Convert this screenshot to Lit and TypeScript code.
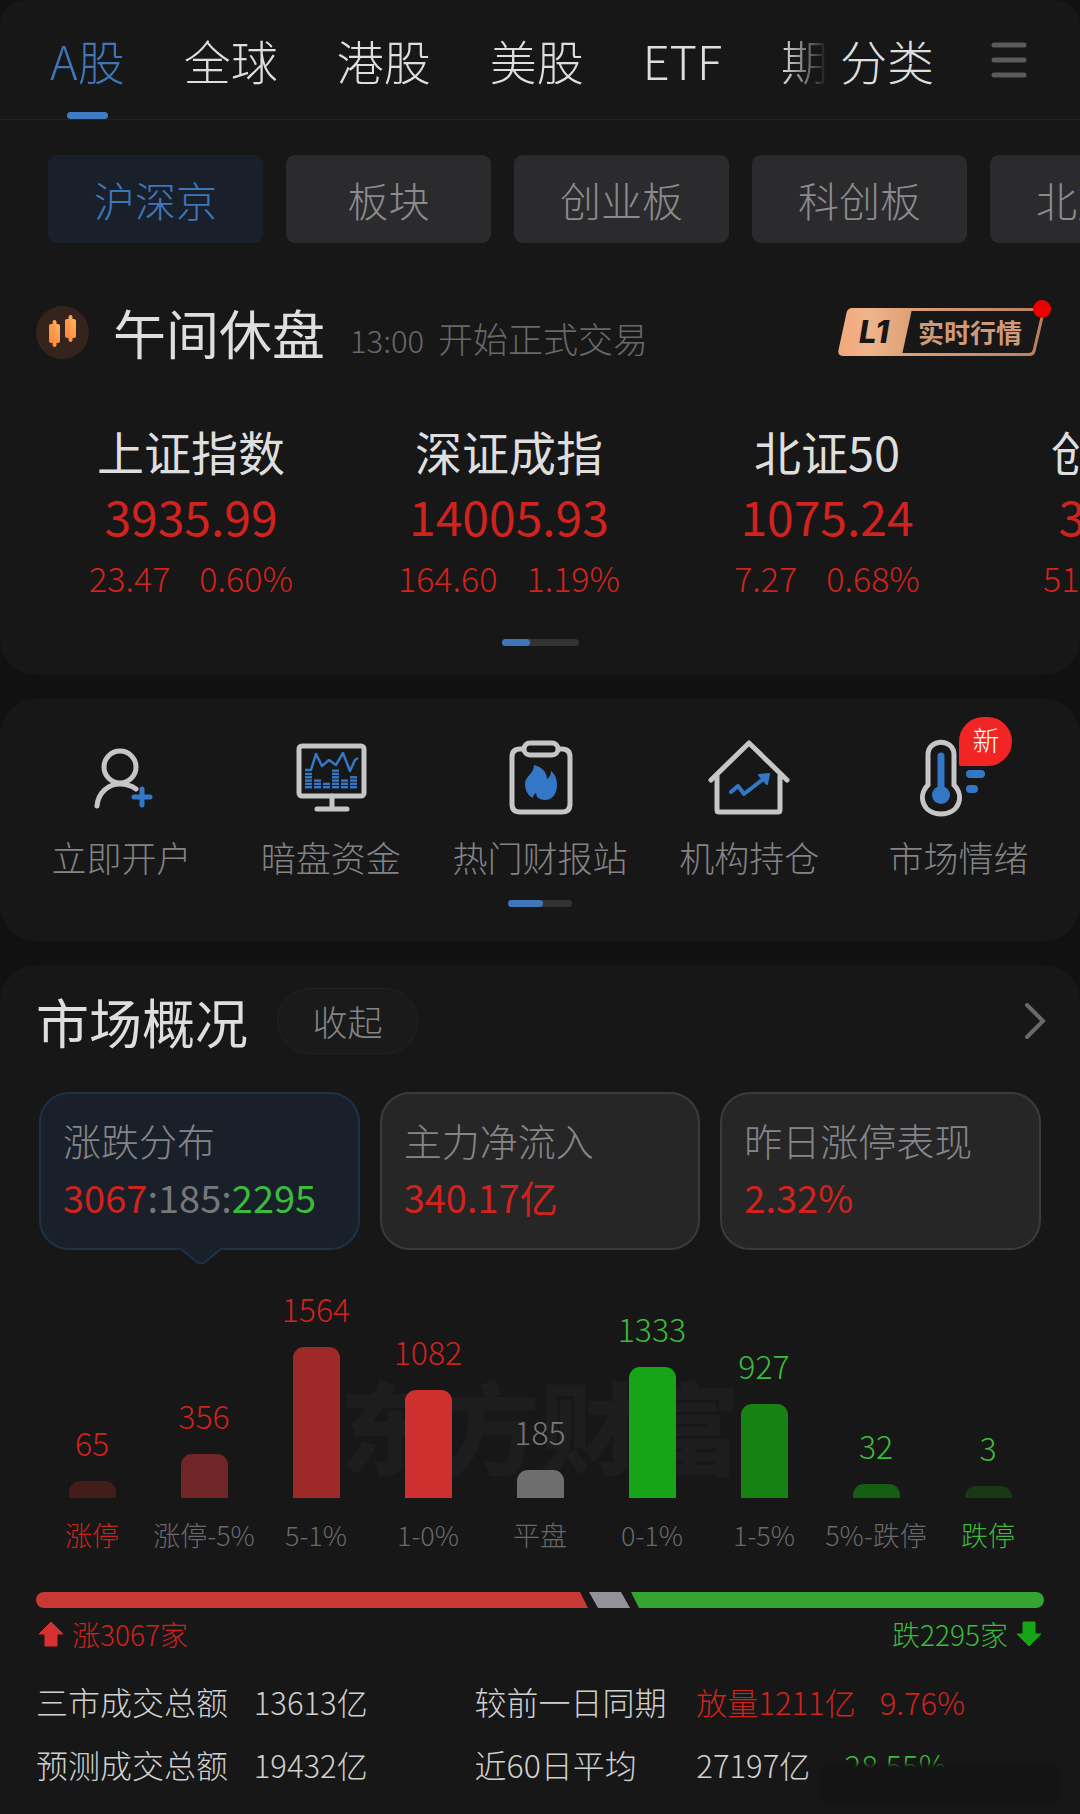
import { LitElement, html, css, svg, nothing } from "lit";
import { customElement, state } from "lit/decorators.js";
import { classMap } from "lit/directives/class-map.js";
import { styleMap } from "lit/directives/style-map.js";

interface IndexQuote { name: string; value: string; change: string; percent: string; }
interface Shortcut { label: string; icon: unknown; badge?: string; }
interface Bucket { label: string; count: number; height: number; color: string; tone: string; edge?: boolean; }

const TABS = ["A股", "全球", "港股", "美股", "ETF", "期货"];
const BOARDS = ["沪深京", "板块", "创业板", "科创板", "北交所"];

const QUOTES: IndexQuote[] = [
  { name: "上证指数", value: "3935.99", change: "23.47", percent: "0.60%" },
  { name: "深证成指", value: "14005.93", change: "164.60", percent: "1.19%" },
  { name: "北证50", value: "1075.24", change: "7.27", percent: "0.68%" },
  { name: "创业板指", value: "3300.00", change: "51.00", percent: "1.57%" },
];

const BUCKETS: Bucket[] = [
  { label: "涨停", count: 65, height: 17, color: "#431c1c", tone: "up", edge: true },
  { label: "涨停-5%", count: 356, height: 44, color: "#702527", tone: "up" },
  { label: "5-1%", count: 1564, height: 151, color: "#9d2a29", tone: "up" },
  { label: "1-0%", count: 1082, height: 108, color: "#ce302f", tone: "up" },
  { label: "平盘", count: 185, height: 28, color: "#6e6e6e", tone: "flat" },
  { label: "0-1%", count: 1333, height: 131, color: "#16a516", tone: "down" },
  { label: "1-5%", count: 927, height: 94, color: "#168214", tone: "down" },
  { label: "5%-跌停", count: 32, height: 14, color: "#165d14", tone: "down" },
  { label: "跌停", count: 3, height: 12, color: "#173916", tone: "down", edge: true },
];

const BREADTH = { up: 3067, flat: 185, down: 2295 };

/* Volume columns under the trend line of the monitor icon: x position and number of slices. */
const MONITOR_COLUMNS = [[14, 5], [23, 3], [32, 2], [41, 6], [50, 3], [59, 4]];

const accountIcon = svg`
  <g fill="none" stroke-linecap="round" stroke-width="5">
    <circle cx="38" cy="28" r="16" stroke="#c6c6c6"></circle>
    <path d="M15 67C16 54 26 45 38 45C44 45 50 47 54 50" stroke="#c6c6c6"></path>
    <path d="M52 58H68M60 50V66" stroke="#3377c6"></path>
  </g>`;

const monitorIcon = svg`
  <g fill="none" stroke="#c6c6c6" stroke-width="5" stroke-linecap="round">
    <rect x="8" y="7" width="65" height="50" rx="3"></rect>
    <path d="M41 57V69M26 70H56"></path>
  </g>
  <path d="M14 31H20L25 15L31 27L38 21L45 26L52 14L59 32L64 21L67 19" fill="none" stroke="#3377c6" stroke-width="2.500" stroke-linejoin="round"></path>
  <g fill="#3377c6">${MONITOR_COLUMNS.map(([x, n]) =>
    Array.from({ length: n }, (_, i) => svg`<rect x=${x} y=${(47 - i * 3.3).toFixed(1)} width="7" height="2.400"></rect>`))}</g>`;

const reportIcon = svg`
  <g fill="none" stroke="#c6c6c6" stroke-width="5">
    <path d="M22 10H20Q12 10 12 18V65Q12 73 20 73H62Q70 73 70 65V18Q70 10 62 10H60"></path>
    <rect x="24" y="4" width="34" height="12" rx="6"></rect>
  </g>
  <path d="M34 26C42 28 47 33 47 40C50 38 51 35 51 32C55 35 57 40 57 46C57 55 52 61 45 61C42 61 39 60 37 58L36 54C34 55 33 57 33 59C28 57 25 51 25 45C25 37 34 35 34 26Z" fill="#3377c6"></path>`;

const holdingIcon = svg`
  <g fill="none" stroke="#c6c6c6" stroke-width="5" stroke-linecap="round" stroke-linejoin="round">
    <path d="M2 41L40 4L78 41"></path>
    <path d="M8 37V71Q8 73 10 73H69Q71 73 71 71V37"></path>
  </g>
  <path d="M22 53L29 47L35 55L53 41" fill="none" stroke="#3377c6" stroke-width="4" stroke-linecap="round" stroke-linejoin="round"></path>
  <path d="M50 36L60 35L58 45Z" fill="#3377c6" stroke="#3377c6" stroke-width="2" stroke-linejoin="round"></path>`;

const moodIcon = svg`
  <path d="M10 16C10 -1 36 -1 36 16V46C47 57 41 75 23 75C5 75 -1 57 10 46Z" fill="none" stroke="#c6c6c6" stroke-width="5"></path>
  <path d="M23 17V54" stroke="#3377c6" stroke-width="7" stroke-linecap="round"></path>
  <circle cx="23" cy="56" r="9" fill="#3377c6"></circle>
  <path d="M52 35H63M52 50H56" stroke="#3377c6" stroke-width="8" stroke-linecap="round"></path>`;

const SHORTCUTS: Shortcut[] = [
  { label: "立即开户", icon: accountIcon },
  { label: "暗盘资金", icon: monitorIcon },
  { label: "热门财报站", icon: reportIcon },
  { label: "机构持仓", icon: holdingIcon },
  { label: "市场情绪", icon: moodIcon, badge: "新" },
];

@customElement("app-root")
export class AppRoot extends LitElement {
  @state() private tab = 0;
  @state() private board = 0;
  @state() private card = 0;

  static styles = css`
    :host {
      display: block;
      min-height: 100vh;
      background: #111111;
      color: #dedede;
      font-family: "Noto Sans CJK SC", sans-serif;
      font-weight: 300;
      overflow: hidden;
    }
    * { box-sizing: border-box; }
    button {
      margin: 0; padding: 0; border: 0; background: none; color: inherit;
      font: inherit; text-align: inherit; white-space: nowrap; cursor: pointer; flex: none;
    }
    a { color: inherit; text-decoration: none; }
    h2, p, dl, dd, dt { margin: 0; font-weight: inherit; }
    svg { display: block; flex: none; overflow: visible; }
    .page { display: flex; flex-direction: column; gap: 24px; }
    .panel { background: #171717; border-radius: 36px; overflow: hidden; }
    .panel.top { border-radius: 24px 24px 36px 36px; padding-bottom: 29px; }
    .panel.last { border-radius: 36px 36px 0 0; padding: 23px 36px 20px; }
    .up { color: #d0221e; }
    .down { color: #3cba3c; }
    .flat { color: #77777a; }

    .nav {
      display: flex; align-items: stretch; height: 120px; padding-right: 53px;
      border-bottom: 1px solid #232323; font-size: 47px; line-height: 116px;
    }
    .tabs {
      display: flex; gap: 59px; flex: 1; min-width: 0; overflow: hidden; padding-left: 50px;
      mask-image: linear-gradient(to right, #000 calc(100% - 48px), transparent calc(100% - 2px));
    }
    .tab { position: relative; }
    .tab.on { color: #3f76ba; }
    .tab.on::after {
      content: ""; position: absolute; left: 50%; bottom: 0; width: 41px; height: 7px;
      margin-left: -20px; border-radius: 4px; background: #3f7cc4;
    }
    .category { margin-left: 10px; }
    .menu { display: flex; align-items: center; margin-left: 57px; }

    .boards { display: flex; gap: 23px; padding: 35px 0 0 48px; }
    .board {
      height: 88px; min-width: 205px; padding: 0 46px; border-radius: 9px; text-align: center;
      background: #2b2b2d; color: #8b8b8d; font-size: 41px; line-height: 84px;
    }
    .board.on { background: #19202a; color: #3f76ba; }

    .session { display: flex; align-items: center; height: 60px; margin-top: 59px; padding: 0 34px 0 36px; }
    .session-title { margin-left: 24px; font-size: 53px; line-height: 60px; font-weight: 400; }
    .session-note { display: flex; align-items: baseline; gap: 14px; margin: 14px auto 0 25px; color: #68686a; font-size: 35px; line-height: 50px; }
    .session-time { font-size: 31px; }
    .level { position: relative; display: flex; align-items: center; width: 208px; height: 48px; }
    .level-frame { position: absolute; inset: 0; }
    .level-tag {
      position: relative; width: 74px; padding-right: 2px; text-align: center; color: #171717;
      font: italic 800 31px/46px Inter, "Liberation Sans", sans-serif;
    }
    .level-text { position: relative; margin-left: 6px; color: #d09a7a; font-size: 26px; line-height: 44px; font-weight: 700; }

    .quotes { display: flex; padding: 58px 0 0 32px; overflow: hidden; }
    .quote { flex: none; width: 318px; display: flex; flex-direction: column; align-items: center; white-space: nowrap; }
    .quote-name { font-size: 47px; line-height: 62px; font-weight: 400; }
    .quote-value { font-size: 48px; line-height: 66px; font-weight: 400; }
    .quote-change { display: flex; gap: 29px; font-size: 34px; line-height: 60px; }

    .pager { width: 77px; height: 7px; margin: 31px auto 0; border-radius: 4px; background: #333333; }
    .pager-thumb { width: 28px; height: 7px; border-radius: 4px; background: #3f76ba; }
    .pager.small { width: 64px; margin-top: 18px; }
    .pager.small .pager-thumb { width: 35px; }

    .panel.links { padding: 40px 17px 34px; }
    .shortcuts { display: grid; grid-template-columns: repeat(5, 1fr); }
    .shortcut { display: flex; flex-direction: column; align-items: center; color: #838385; font-size: 35px; line-height: 50px; white-space: nowrap; }
    .shortcut-icon { position: relative; width: 80px; height: 78px; margin-bottom: 15px; }
    .badge {
      position: absolute; left: 41px; top: -22px; width: 53px; height: 49px; text-align: center;
      border-radius: 25px 25px 25px 2px; background: #f32424; color: #ffffff; font-size: 27px; line-height: 46px;
    }

    .head { display: flex; align-items: center; height: 66px; }
    .head-title { font-size: 53px; line-height: 62px; font-weight: 400; }
    .collapse {
      width: 141px; height: 66px; margin: 0 auto 0 29px; border: 1px solid #222222; border-radius: 33px;
      background: #1a1a1a; color: #858587; font-size: 35px; line-height: 60px; text-align: center;
    }
    .cards { display: grid; grid-template-columns: repeat(3, 1fr); gap: 20px; padding: 38px 3px 0; }
    .card {
      position: relative; height: 158px; padding: 0 22px 6px; border: 2px solid #3b3b3d; border-radius: 30px;
      background: #262626; color: #858589; font-size: 38px; line-height: 57px;
    }
    .card.on { background: #19202a; border-color: #1e3149; }
    .card-label, .card-value { display: block; }
    .card-value { font-weight: 400; }
    .card-pointer { position: absolute; left: 50%; top: 154px; margin-left: -18px; }

    .chart { position: relative; display: grid; grid-template-columns: repeat(9, 1fr); height: 305px; }
    .watermark {
      position: absolute; left: 0; right: 0; top: 104px; text-align: center;
      color: #1d1d1d; font-size: 100px; line-height: 140px; font-weight: 900;
    }
    .bucket { position: relative; display: flex; flex-direction: column; align-items: center; justify-content: flex-end; white-space: nowrap; }
    .bucket-count { font-size: 32px; line-height: 46px; margin-bottom: 16px; }
    .bar { width: 47px; border-radius: 11px 11px 0 0; }
    .bucket-label { font-size: 27px; line-height: 40px; margin-top: 17px; color: #69696b; }
    .bucket-label.up { color: #d0221e; }
    .bucket-label.down { color: #3cba3c; }

    .breadth { display: flex; gap: 1px; height: 16px; margin-top: 37px; }
    .breadth-up { border-radius: 8px 0 0 8px; background: #c83835; clip-path: polygon(0 0, calc(100% - 8px) 0, 100% 100%, 0 100%); }
    .breadth-flat { min-width: 41px; background: #929298; clip-path: polygon(0 0, calc(100% - 9px) 0, 100% 100%, 9px 100%); }
    .breadth-down { border-radius: 0 8px 8px 0; background: #35a432; clip-path: polygon(0 0, 100% 0, 100% 100%, 8px 100%); }
    .totals { display: flex; justify-content: space-between; padding: 6px 2px 0; font-size: 28px; line-height: 40px; }
    .total { display: flex; align-items: center; gap: 8px; }

    .stats {
      display: grid; grid-template-columns: 218fr 221fr 222fr 348fr; align-items: baseline; margin-top: 16px;
      font-size: 32px; line-height: 63px; color: #d0d0d0; white-space: nowrap;
    }
    .stat-value { display: flex; gap: 24px; font-size: 31px; }
    .smudged { position: relative; }
    .smudge {
      position: absolute; left: -14px; top: 31px; width: 240px; height: 40px; border-radius: 14px;
      background: #141414; filter: blur(2px);
    }
  `;

  private renderNav() {
    return html`
      <nav class="nav">
        <div class="tabs">
          ${TABS.map((t, i) => html`<button class=${classMap({ tab: true, on: i === this.tab })} @click=${() => (this.tab = i)}>${t}</button>`)}
        </div>
        <button class="category">分类</button>
        <button class="menu" aria-label="菜单">
          <svg width="36" height="36" viewBox="0 0 36 36"><path d="M3 3H33M3 18H33M3 33H33" stroke="#5b5b5b" stroke-width="5" stroke-linecap="round"></path></svg>
        </button>
      </nav>`;
  }

  private renderSession() {
    return html`
      <div class="session">
        <svg width="53" height="53" viewBox="0 0 53 53">
          <defs><linearGradient id="flare" x1="0" y1="1" x2="1" y2="0"><stop offset="0" stop-color="#ff8038"></stop><stop offset="1" stop-color="#ffb45e"></stop></linearGradient></defs>
          <circle cx="26.5" cy="26.5" r="26.5" fill="#35241c"></circle>
          <g fill="url(#flare)">
            <rect x="13" y="18" width="11" height="19" rx="2"></rect><rect x="16.5" y="14" width="4" height="27" rx="2"></rect>
            <rect x="29" y="13" width="11" height="19" rx="2"></rect><rect x="32.5" y="9" width="4" height="27" rx="2"></rect>
          </g>
        </svg>
        <h2 class="session-title">午间休盘</h2>
        <p class="session-note"><span class="session-time">13:00</span><span>开始正式交易</span></p>
        <a class="level" href="#level1">
          <svg class="level-frame" width="208" height="48" viewBox="0 0 208 48">
            <defs><linearGradient id="copper" gradientUnits="userSpaceOnUse" x1="0" x2="208"><stop offset="0" stop-color="#f0a878"></stop><stop offset="0.15" stop-color="#f0b48c"></stop><stop offset="0.35" stop-color="#dd9f76"></stop><stop offset="1" stop-color="#b67e60"></stop></linearGradient></defs>
            <path d="M14 1.500H202Q206 1.500 205 5L196 43Q195 46.500 191 46.500H5Q1 46.500 2 42L10 5Q11 1.500 14 1.500Z" fill="none" stroke="url(#copper)" stroke-width="3"></path>
            <path d="M14 1H74L64 47H5Q0 47 1.500 42L9.500 5Q10.500 1 14 1Z" fill="url(#copper)"></path>
            <circle cx="204" cy="1" r="9" fill="#ee0000"></circle>
          </svg>
          <span class="level-tag">L1</span><span class="level-text">实时行情</span>
        </a>
      </div>`;
  }

  private renderQuotes() {
    return html`
      <div class="quotes">
        ${QUOTES.map((q) => html`
          <div class="quote">
            <span class="quote-name">${q.name}</span>
            <span class="quote-value up">${q.value}</span>
            <span class="quote-change up"><span>${q.change}</span><span>${q.percent}</span></span>
          </div>`)}
      </div>`;
  }

  private renderCard(index: number, label: string, value: unknown) {
    const on = index === this.card;
    return html`
      <button class=${classMap({ card: true, on })} @click=${() => (this.card = index)}>
        <span class="card-label">${label}</span>
        <span class="card-value up">${value}</span>
        ${on ? html`<svg class="card-pointer" width="40" height="18" viewBox="0 0 40 18">
          <path d="M0 0L16 14Q20 17 24 14L40 0Z" fill="#19202a"></path>
          <path d="M0 1L16 14Q20 17 24 14L40 1" fill="none" stroke="#1e3149" stroke-width="2"></path>
        </svg>` : nothing}
      </button>`;
  }

  private renderChart() {
    return html`
      <div class="chart">
        <div class="watermark" aria-hidden="true">东方财富</div>
        ${BUCKETS.map((b) => html`
          <div class="bucket">
            <span class="bucket-count ${b.tone}">${b.count}</span>
            <div class="bar" style=${styleMap({ height: `${b.height}px`, background: b.color })}></div>
            <span class="bucket-label ${b.edge ? b.tone : ""}">${b.label}</span>
          </div>`)}
      </div>
      <div class="breadth">
        <div class="breadth-up" style=${styleMap({ flex: `${BREADTH.up} 1 0` })}></div>
        <div class="breadth-flat" style=${styleMap({ flex: `${BREADTH.flat} 1 0` })}></div>
        <div class="breadth-down" style=${styleMap({ flex: `${BREADTH.down} 1 0` })}></div>
      </div>
      <div class="totals">
        <span class="total up">
          <svg width="26" height="26" viewBox="0 0 26 26"><path d="M13 1L25 13H19V25H7V13H1Z" fill="#d63030" stroke="#d63030" stroke-linejoin="round"></path></svg>
          涨${BREADTH.up}家
        </span>
        <span class="total down">
          跌${BREADTH.down}家
          <svg width="26" height="26" viewBox="0 0 26 26"><path d="M13 25L25 13H19V1H7V13H1Z" fill="#16a516" stroke="#16a516" stroke-linejoin="round"></path></svg>
        </span>
      </div>`;
  }

  render() {
    return html`
      <main class="page">
        <section class="panel top">
          ${this.renderNav()}
          <div class="boards">
            ${BOARDS.map((b, i) => html`<button class=${classMap({ board: true, on: i === this.board })} @click=${() => (this.board = i)}>${b}</button>`)}
          </div>
          ${this.renderSession()}
          ${this.renderQuotes()}
          <div class="pager"><div class="pager-thumb"></div></div>
        </section>

        <section class="panel links">
          <div class="shortcuts">
            ${SHORTCUTS.map((s) => html`
              <a class="shortcut" href="#shortcut">
                <span class="shortcut-icon">
                  <svg width="80" height="78" viewBox="0 0 80 78">${s.icon}</svg>
                  ${s.badge ? html`<span class="badge">${s.badge}</span>` : nothing}
                </span>
                <span>${s.label}</span>
              </a>`)}
          </div>
          <div class="pager small"><div class="pager-thumb"></div></div>
        </section>

        <section class="panel last">
          <div class="head">
            <h2 class="head-title">市场概况</h2>
            <button class="collapse">收起</button>
            <button aria-label="更多">
              <svg width="20" height="36" viewBox="0 0 20 36"><path d="M3 2L19 18L3 34" fill="none" stroke="#69696b" stroke-width="4" stroke-linecap="round"></path></svg>
            </button>
          </div>
          <div class="cards">
            ${this.renderCard(0, "涨跌分布", html`${BREADTH.up}<span class="flat">:${BREADTH.flat}:</span><span class="down">${BREADTH.down}</span>`)}
            ${this.renderCard(1, "主力净流入", "340.17亿")}
            ${this.renderCard(2, "昨日涨停表现", "2.32%")}
          </div>
          ${this.renderChart()}
          <dl class="stats">
            <dt>三市成交总额</dt><dd class="stat-value">13613亿</dd>
            <dt>较前一日同期</dt><dd class="stat-value up"><span>放量1211亿</span><span>9.76%</span></dd>
            <dt>预测成交总额</dt><dd class="stat-value">19432亿</dd>
            <dt>近60日平均</dt><dd class="stat-value"><span>27197亿</span><span class="smudged down">-28.55%<span class="smudge"></span></span></dd>
          </dl>
        </section>
      </main>`;
  }
}
